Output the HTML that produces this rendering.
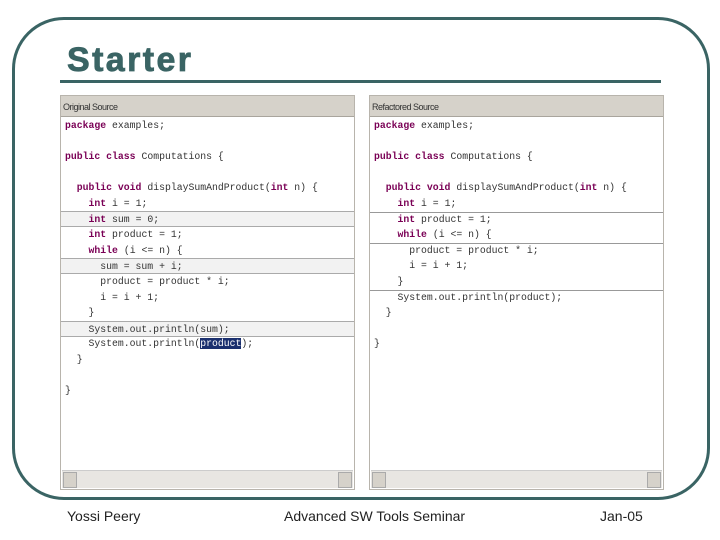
<!DOCTYPE html>
<html><head><meta charset="utf-8"><style>
body{margin:0;width:720px;height:540px;background:#fff;position:relative;overflow:hidden;font-family:"Liberation Sans",sans-serif}
.frame{position:absolute;left:12px;top:17px;width:692px;height:477px;border:3px solid #3a6464;border-radius:52px}
.title{position:absolute;left:67px;top:41px;font-size:34px;font-weight:bold;color:#3a6464;letter-spacing:2.4px;-webkit-text-stroke:0.8px #3a6464}
.ul{position:absolute;left:60px;top:80px;width:601px;height:3px;background:#3a6464}
.panel{position:absolute;top:95px;width:295px;height:395px;background:#fff;border:1px solid #b8b4ac;box-sizing:border-box}
.hd{height:20px;background:#d6d2ca;border-bottom:1px solid #a9a59d;font-size:9px;line-height:22px;padding-left:2px;color:#333;letter-spacing:-0.5px}
.code{position:absolute;left:0;top:22px;right:0;font-family:"Liberation Mono",monospace;font-size:9.8px;color:#333}
.ln{position:absolute;left:0;right:0;height:15.6px;line-height:15.6px;white-space:pre;padding-left:4px;box-sizing:border-box}
.hl{background:#f2f2f2;border-top:1px solid #aaa;border-bottom:1px solid #aaa}
b{color:#7a0055}
.sel{background:#1a2f6e;color:#fff}
.sb{position:absolute;left:1px;right:1px;bottom:1px;height:17px;background:#e8e6e2;border-top:1px solid #ccc}
.sb:before,.sb:after{content:"";position:absolute;top:1px;width:12px;height:14px;background:#d6d2ca;border:1px solid #aaa}
.sb:before{left:1px}.sb:after{right:1px}
.rl{position:absolute;left:0;right:0;height:1px;background:#999}
.ft{position:absolute;top:508px;font-size:14px;color:#222}
</style></head><body>
<div class="frame"></div>
<div class="title">Starter</div>
<div class="ul"></div>

<div class="panel" style="left:60px">
<div class="hd">Original Source</div>
<div class="code">
<div class="ln" style="top:0"><b>package</b> examples;</div>
<div class="ln" style="top:31px"><b>public class</b> Computations {</div>
<div class="ln" style="top:62px">  <b>public void</b> displaySumAndProduct(<b>int</b> n) {</div>
<div class="ln" style="top:78px">    <b>int</b> i = 1;</div>
<div class="ln hl" style="top:93px">    <b>int</b> sum = 0;</div>
<div class="ln" style="top:109px">    <b>int</b> product = 1;</div>
<div class="ln" style="top:125px">    <b>while</b> (i &lt;= n) {</div>
<div class="ln hl" style="top:140px">      sum = sum + i;</div>
<div class="ln" style="top:156px">      product = product * i;</div>
<div class="ln" style="top:172px">      i = i + 1;</div>
<div class="ln" style="top:187px">    }</div>
<div class="ln hl" style="top:203px">    System.out.println(sum);</div>
<div class="ln" style="top:218px">    System.out.println(<span class="sel">product</span>);</div>
<div class="ln" style="top:234px">  }</div>
<div class="ln" style="top:265px">}</div>
</div>
<div class="sb"></div>
</div>

<div class="panel" style="left:369px">
<div class="hd">Refactored Source</div>
<div class="code">
<div class="ln" style="top:0"><b>package</b> examples;</div>
<div class="ln" style="top:31px"><b>public class</b> Computations {</div>
<div class="ln" style="top:62px">  <b>public void</b> displaySumAndProduct(<b>int</b> n) {</div>
<div class="ln" style="top:78px">    <b>int</b> i = 1;</div>
<div class="rl" style="top:94px"></div>
<div class="ln" style="top:94px">    <b>int</b> product = 1;</div>
<div class="ln" style="top:109px">    <b>while</b> (i &lt;= n) {</div>
<div class="rl" style="top:125px"></div>
<div class="ln" style="top:125px">      product = product * i;</div>
<div class="ln" style="top:140px">      i = i + 1;</div>
<div class="ln" style="top:156px">    }</div>
<div class="rl" style="top:172px"></div>
<div class="ln" style="top:172px">    System.out.println(product);</div>
<div class="ln" style="top:187px">  }</div>
<div class="ln" style="top:218px">}</div>
</div>
<div class="sb"></div>
</div>

<div class="ft" style="left:67px">Yossi Peery</div>
<div class="ft" style="left:284px">Advanced SW Tools Seminar</div>
<div class="ft" style="left:600px">Jan-05</div>
</body></html>
